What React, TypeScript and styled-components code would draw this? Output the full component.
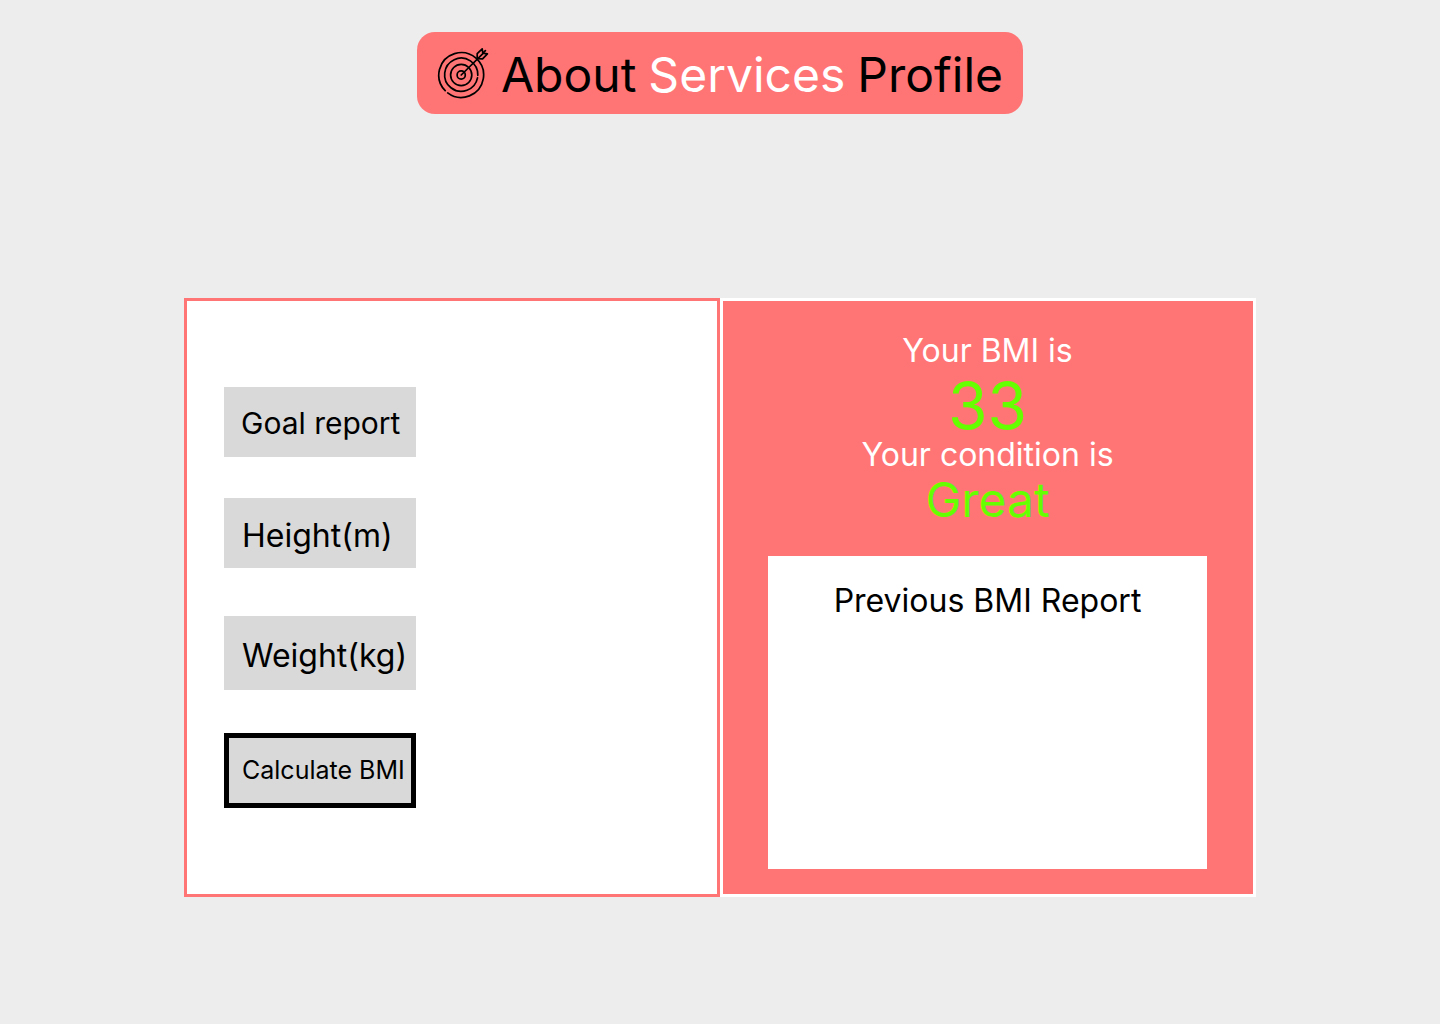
import React from "react";
import styled, { createGlobalStyle } from "styled-components";

const coral = "#ff7575";
const grey = "#d9d9d9";
const lime = "#66ff00";

const GlobalStyle = createGlobalStyle`
  *, *::before, *::after { box-sizing: border-box; }
  body {
    margin: 0;
    background: #ededed;
    color: #000;
    font-family: Inter, "Liberation Sans", sans-serif;
  }
  button, input { font-family: inherit; color: inherit; }
`;

const Page = styled.div`
  min-height: 100vh;
  padding: 32px 24px;
  display: flex;
  flex-direction: column;
  align-items: center;
  gap: 184px;
`;

const NavBar = styled.nav`
  display: flex;
  align-items: center;
  gap: 12px;
  padding: 10px 20px;
  border-radius: 18px;
  background: ${coral};
`;

const Logo = styled.svg`
  width: 52px;
  height: 52px;
  flex: none;
  fill: none;
  stroke: #000;
  stroke-linecap: round;
  stroke-linejoin: round;
`;

const NavLink = styled.a<{ $active?: boolean }>`
  padding-top: 4px;
  font-size: 48px;
  line-height: 58px;
  text-decoration: none;
  color: ${(p) => (p.$active ? "#fff" : "#000")};
`;

const Panels = styled.main`
  width: 100%;
  max-width: 1072px;
  display: grid;
  grid-template-columns: 1fr 1fr;
`;

const FormPanel = styled.form`
  display: flex;
  flex-direction: column;
  align-items: flex-start;
  padding: 86px 37px;
  background: #fff;
  border: 3px solid ${coral};
`;

const ReportButton = styled.button`
  width: 192px;
  height: 70px;
  margin-bottom: 41px;
  padding: 2px 0 0 17px;
  border: 0;
  background: ${grey};
  font-size: 30px;
  text-align: left;
`;

const Field = styled.input<{ $height: number; $space: number }>`
  width: 192px;
  height: ${(p) => p.$height}px;
  margin-bottom: ${(p) => p.$space}px;
  padding: 5px 0 0 18px;
  border: 0;
  border-radius: 0;
  background: ${grey};
  font-size: 32px;
  &::placeholder { color: #000; opacity: 1; }
`;

const SubmitButton = styled.button`
  width: 192px;
  height: 75px;
  padding: 0 0 2px 13px;
  border: 5px solid #000;
  background: ${grey};
  font-size: 25px;
  text-align: left;
  white-space: nowrap;
`;

const ResultPanel = styled.section`
  display: flex;
  flex-direction: column;
  padding: 33px 46px 25px 45px;
  background: ${coral};
  border: 3px solid #fff;
  text-align: center;
`;

const Caption = styled.p`
  margin: 0;
  color: #fff;
  font-size: 32px;
  line-height: 34px;
`;

const Score = styled.p`
  margin: 6px 0 0;
  color: ${lime};
  font-size: 64px;
  line-height: 64px;
`;

const Condition = styled.p`
  margin: 0 0 28px;
  color: ${lime};
  font-size: 48px;
  line-height: 56px;
`;

const History = styled.section`
  flex: 1;
  min-height: 313px;
  padding: 25px 16px;
  background: #fff;
`;

const HistoryTitle = styled.h2`
  margin: 0;
  font-size: 32px;
  font-weight: 400;
  line-height: 39px;
`;

function TargetLogo() {
  return (
    <Logo viewBox="0 0 52 52" strokeWidth="1.7" aria-hidden="true">
      <path d="M8.2 43.7A22.4 22.4 0 1 1 10.7 45.9" />
      <path d="M40.5 30.9A16.6 16.6 0 1 1 40.8 28.3" />
      <circle cx="24.2" cy="28" r="10.6" />
      <circle cx="24.2" cy="28" r="4.1" />
      <path d="M24.2 28L46.4 6.2" />
      <path d="M40.2 11.6V6.6L45.2 1.8L45.8 6.2L50.4 6.8L45.6 11.8Z" />
      <path d="M45.8 6.2L48.4 3.6" />
    </Logo>
  );
}

export default function App() {
  return (
    <>
      <GlobalStyle />
      <Page>
        <NavBar aria-label="Main">
          <TargetLogo />
          <NavLink href="#about">About</NavLink>
          <NavLink href="#services" $active>Services</NavLink>
          <NavLink href="#profile">Profile</NavLink>
        </NavBar>
        <Panels>
          <FormPanel onSubmit={(e: React.FormEvent) => e.preventDefault()}>
            <ReportButton type="button">Goal report</ReportButton>
            <Field $height={70} $space={48} aria-label="Height(m)" placeholder="Height(m)" inputMode="decimal" />
            <Field $height={74} $space={43} aria-label="Weight(kg)" placeholder="Weight(kg)" inputMode="decimal" />
            <SubmitButton type="submit">Calculate BMI</SubmitButton>
          </FormPanel>
          <ResultPanel>
            <Caption>Your BMI is</Caption>
            <Score>33</Score>
            <Caption>Your condition is</Caption>
            <Condition>Great</Condition>
            <History>
              <HistoryTitle>Previous BMI Report</HistoryTitle>
            </History>
          </ResultPanel>
        </Panels>
      </Page>
    </>
  );
}
